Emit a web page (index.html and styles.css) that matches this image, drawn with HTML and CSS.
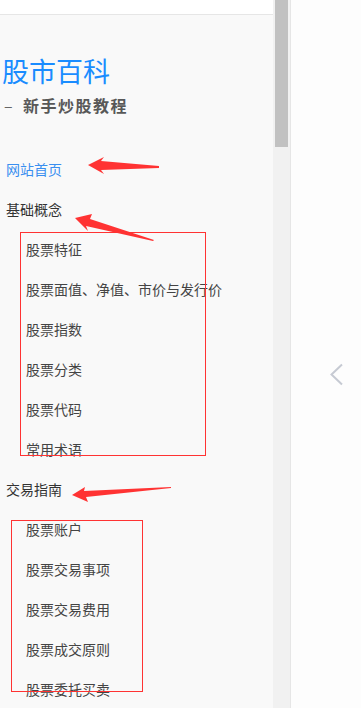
FILE: index.html
```html
<!DOCTYPE html>
<html lang="zh-CN">
<head>
  <meta charset="UTF-8" />
  <meta name="viewport" content="width=device-width, initial-scale=1.0"/>
  <title>股市百科</title>
  <link rel="stylesheet" href="styles.css">
</head>
<body>
  <aside class="sidebar">
    <div class="topbar"></div>
    <h1 class="brand">股市百科</h1>
    <p class="tagline"><span class="dash">–</span>新手炒股教程</p>

    <nav class="menu">
      <a class="menu-home" href="#">网站首页</a>
      <div class="menu-title">基础概念</div>
      <ul class="menu-list list-basic">
        <li>股票特征</li>
        <li>股票面值、净值、市价与发行价</li>
        <li>股票指数</li>
        <li>股票分类</li>
        <li>股票代码</li>
        <li>常用术语</li>
      </ul>
      <div class="menu-title">交易指南</div>
      <ul class="menu-list list-trade">
        <li>股票账户</li>
        <li>股票交易事项</li>
        <li>股票交易费用</li>
        <li>股票成交原则</li>
        <li>股票委托买卖</li>
      </ul>
    </nav>

    <!-- annotation arrows -->
    <svg class="marks" width="273" height="708" viewBox="0 0 273 708">
      <polygon points="88,165 104,157 101,161 159,166 159,168 101,170 104,174" />
      <polygon points="75,218 92,214 90,219 154,240 153,241 86,226 88,231" />
      <polygon points="72,495 85,487 84,491 171,487 171,488 86,497 88,502" />
    </svg>
  </aside>

  <div class="scrollbar"><div class="thumb"></div></div>

  <main class="content">
    <svg class="back" width="14" height="24" viewBox="0 0 14 24">
      <polyline points="12,1.5 1.5,11.5 12,21.5" />
    </svg>
  </main>
</body>
</html>
```

FILE: styles.css
```css
body {
  margin: 0;
  height: 708px;
  overflow: hidden;
  display: flex;
  font-family: "Noto Sans CJK SC", "Noto Sans", sans-serif;
  background: #fdfdfd;
}

.sidebar {
  position: relative;
  width: 273px;
  flex-shrink: 0;
  background: #f9f9f9;
  overflow: hidden;
}

.topbar {
  height: 14px;
  background: #fff;
  border-bottom: 1px solid #e6e6e6;
}

.brand {
  margin: 40px 0 0;
  padding-left: 2px;
  font-size: 27px;
  line-height: 32px;
  font-weight: normal;
  color: #1a8cff;
}

.tagline {
  margin: 6px 0 0;
  padding-left: 4px;
  font-size: 16px;
  line-height: 24px;
  letter-spacing: 1.5px;
  font-weight: bold;
  color: #585858;
}

.dash {
  display: inline-block;
  width: 19px;
  font-weight: normal;
  color: #666;
}

.menu {
  margin-top: 32px;
  font-size: 14px;
  line-height: 40px;
}

.menu-home,
.menu-title {
  display: block;
  padding-left: 6px;
  color: #333;
  text-decoration: none;
}

.menu-home {
  color: #3a8ff0;
}

.menu-list {
  position: relative;
  list-style: none;
  margin: 0;
  padding: 0;
}

.menu-list li {
  padding-left: 26px;
  color: #444;
  white-space: nowrap;
}

/* red annotation boxes */
.menu-list::after {
  content: "";
  position: absolute;
  border: 1px solid #f33;
}

.list-basic::after {
  top: 3px;
  left: 20px;
  width: 184px;
  height: 222px;
}

.list-trade::after {
  top: 11px;
  left: 11px;
  width: 130px;
  height: 170px;
}

.marks {
  position: absolute;
  top: 0;
  left: 0;
  fill: #f33;
}

.scrollbar {
  width: 17px;
  flex-shrink: 0;
  background: #f1f1f1;
}

.thumb {
  width: 13px;
  height: 147px;
  margin: 0 2px;
  background: #c1c1c1;
}

.content {
  flex: 1;
  border-left: 1px solid #e6e6e6;
  padding: 363px 0 0 39px;
}

.back {
  fill: none;
  stroke: #c6cad3;
  stroke-width: 2;
}
```
